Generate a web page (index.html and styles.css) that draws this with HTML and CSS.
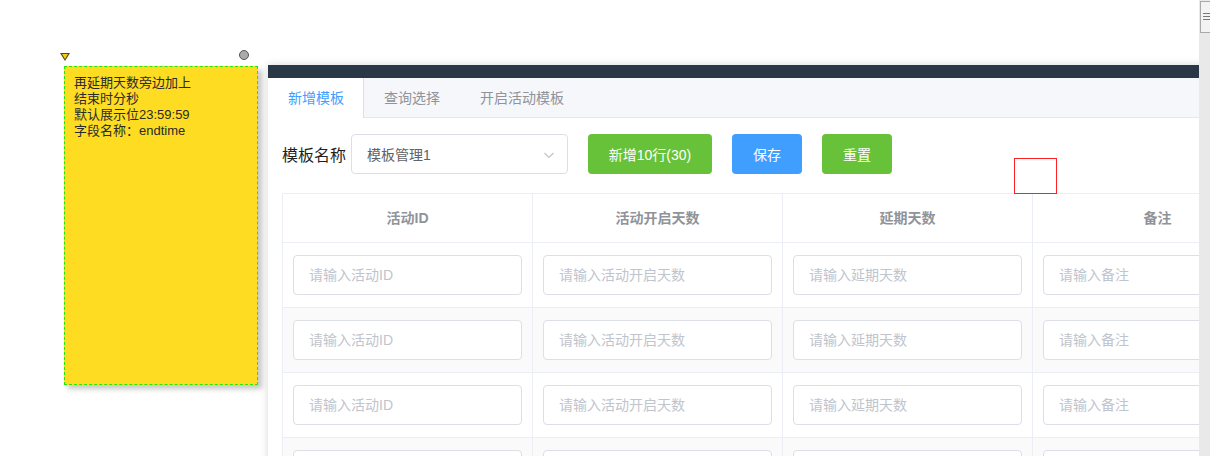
FILE: index.html
```html
<!DOCTYPE html>
<html lang="zh">
<head>
<meta charset="utf-8">
<title>模板管理</title>
<link rel="stylesheet" href="styles.css">
</head>
<body>
<div class="canvas">
  <div class="note">
    <span class="marker-tri"></span>
    <span class="marker-dot"></span>
    <p>再延期天数旁边加上</p>
    <p>结束时分秒</p>
    <p>默认展示位23:59:59</p>
    <p>字段名称：endtime</p>
  </div>

  <div class="panel">
    <div class="topbar"></div>
    <div class="tabs">
      <div class="tab active">新增模板</div>
      <div class="tab">查询选择</div>
      <div class="tab">开启活动模板</div>
    </div>
    <div class="content">
      <div class="form-row">
        <span class="label">模板名称</span>
        <div class="select">
          <span>模板管理1</span>
          <svg class="chev" width="12" height="12" viewBox="0 0 12 12"><path d="M1.5 4 L6 8.5 L10.5 4" fill="none" stroke="#c0c4cc" stroke-width="1.2"/></svg>
        </div>
        <button class="btn green wide">新增10行(30)</button>
        <button class="btn blue">保存</button>
        <button class="btn green">重置</button>
      </div>
      <div class="table">
        <div class="tr head">
          <div class="td">活动ID</div>
          <div class="td">活动开启天数</div>
          <div class="td">延期天数</div>
          <div class="td">备注</div>
        </div>
        <div class="tr">
          <div class="td"><div class="input">请输入活动ID</div></div>
          <div class="td"><div class="input">请输入活动开启天数</div></div>
          <div class="td"><div class="input">请输入延期天数</div></div>
          <div class="td"><div class="input">请输入备注</div></div>
        </div>
        <div class="tr striped">
          <div class="td"><div class="input">请输入活动ID</div></div>
          <div class="td"><div class="input">请输入活动开启天数</div></div>
          <div class="td"><div class="input">请输入延期天数</div></div>
          <div class="td"><div class="input">请输入备注</div></div>
        </div>
        <div class="tr">
          <div class="td"><div class="input">请输入活动ID</div></div>
          <div class="td"><div class="input">请输入活动开启天数</div></div>
          <div class="td"><div class="input">请输入延期天数</div></div>
          <div class="td"><div class="input">请输入备注</div></div>
        </div>
        <div class="tr striped">
          <div class="td"><div class="input">请输入活动ID</div></div>
          <div class="td"><div class="input">请输入活动开启天数</div></div>
          <div class="td"><div class="input">请输入延期天数</div></div>
          <div class="td"><div class="input">请输入备注</div></div>
        </div>
      </div>
    </div>
  </div>
</div>
<div class="redbox"></div>
<div class="scrollbar"><div class="thumb"><i></i><i></i><i></i></div></div>
</body>
</html>
```

FILE: styles.css
```css
html, body {
  margin: 0;
  padding: 0;
  overflow: hidden;
  background: #fff;
  font-family: "Liberation Sans", "Noto Sans CJK SC", sans-serif;
}
.canvas {
  display: flex;
  align-items: flex-start;
  width: 1400px;
}
.note {
  position: relative;
  box-sizing: border-box;
  width: 194px;
  height: 319px;
  margin: 66px 0 0 64px;
  padding: 8px 9px;
  background: #fddc22;
  border: 1px dashed #22e81a;
  box-shadow: 4px 4px 5px rgba(0,0,0,0.22);
  font-size: 13px;
  line-height: 16px;
  color: #2a2a2a;
}
.note p { margin: 0; }
.marker-tri {
  position: absolute;
  left: -5px;
  top: -14px;
  width: 0;
  height: 0;
  border-left: 5px solid transparent;
  border-right: 5px solid transparent;
  border-top: 8px solid #5a4a10;
}
.marker-tri::after {
  content: "";
  position: absolute;
  left: -3px;
  top: -7px;
  border-left: 3px solid transparent;
  border-right: 3px solid transparent;
  border-top: 5px solid #f8d010;
}
.marker-dot {
  position: absolute;
  left: 174px;
  top: -17px;
  width: 8px;
  height: 8px;
  border-radius: 50%;
  background: #aaa;
  border: 1px solid #555;
}
.panel {
  margin: 65px 0 0 10px;
  width: 1040px;
  height: 420px;
  background: #fff;
  box-shadow: 0 0 8px rgba(0,0,0,0.16);
}
.topbar {
  height: 13px;
  background: #2a3746;
}
.tabs {
  display: flex;
  height: 40px;
  background: #f5f7fa;
  border-bottom: 1px solid #e4e7ed;
  box-sizing: border-box;
}
.tab {
  padding: 0 20px;
  line-height: 40px;
  font-size: 14px;
  color: #909399;
}
.tab.active {
  background: #fff;
  color: #409eff;
  padding-right: 19px;
  border-right: 1px solid #dcdfe6;
  height: 40px;
  box-sizing: border-box;
}
.content {
  padding: 16px 15px 0 14px;
}
.form-row {
  display: flex;
  align-items: center;
  height: 40px;
}
.label {
  font-size: 16px;
  color: #1f1f1f;
  margin-right: 5px;
}
.select {
  box-sizing: border-box;
  width: 217px;
  height: 40px;
  border: 1px solid #dcdfe6;
  border-radius: 4px;
  display: flex;
  align-items: center;
  justify-content: space-between;
  padding: 0 12px 0 15px;
  font-size: 14px;
  color: #606266;
  margin-right: 20px;
}
.chev { margin-top: 1px; }
.btn {
  height: 40px;
  border: 0;
  border-radius: 4px;
  padding: 0 20px;
  width: 70px;
  font-family: inherit;
  font-size: 14px;
  color: #fff;
  margin-right: 20px;
}
.btn.wide { width: 124px; }
.btn.green { background: #67c23a; }
.btn.blue { background: #409eff; }
.table {
  margin-top: 19px;
  margin-left: 0;
  border-top: 1px solid #ebeef5;
  border-left: 1px solid #ebeef5;
}
.tr {
  display: flex;
}
.tr.striped { background: #fafafa; }
.td {
  box-sizing: border-box;
  width: 250px;
  flex: none;
  border-right: 1px solid #ebeef5;
  border-bottom: 1px solid #ebeef5;
  padding: 12px 10px 12px 10px;
}
.tr.head .td {
  height: 49px;
  padding: 0;
  line-height: 48px;
  text-align: center;
  font-size: 14px;
  font-weight: bold;
  color: #909399;
}
.tr:not(.head) .td { height: 65px; }
.input {
  box-sizing: border-box;
  height: 40px;
  border: 1px solid #dcdfe6;
  border-radius: 4px;
  background: #fff;
  padding: 0 15px;
  line-height: 38px;
  font-size: 14px;
  color: #c0c4cc;
}
.redbox {
  position: absolute;
  left: 1014px;
  top: 158px;
  width: 41px;
  height: 34px;
  border: 1px solid #f22;
}
.scrollbar {
  position: fixed;
  right: 0;
  top: 0;
  width: 11px;
  height: 100%;
  background: #e9e9e9;
}
.thumb {
  position: absolute;
  left: 1px;
  top: 1px;
  width: 10px;
  height: 32px;
  box-sizing: border-box;
  background: #f3f3f3;
  border: 1px solid #a9a9a9;
  border-right: 0;
  padding-top: 11px;
  padding-left: 2px;
}
.thumb i {
  display: block;
  width: 8px;
  height: 1px;
  background: #777;
  margin-bottom: 2px;
}
```
